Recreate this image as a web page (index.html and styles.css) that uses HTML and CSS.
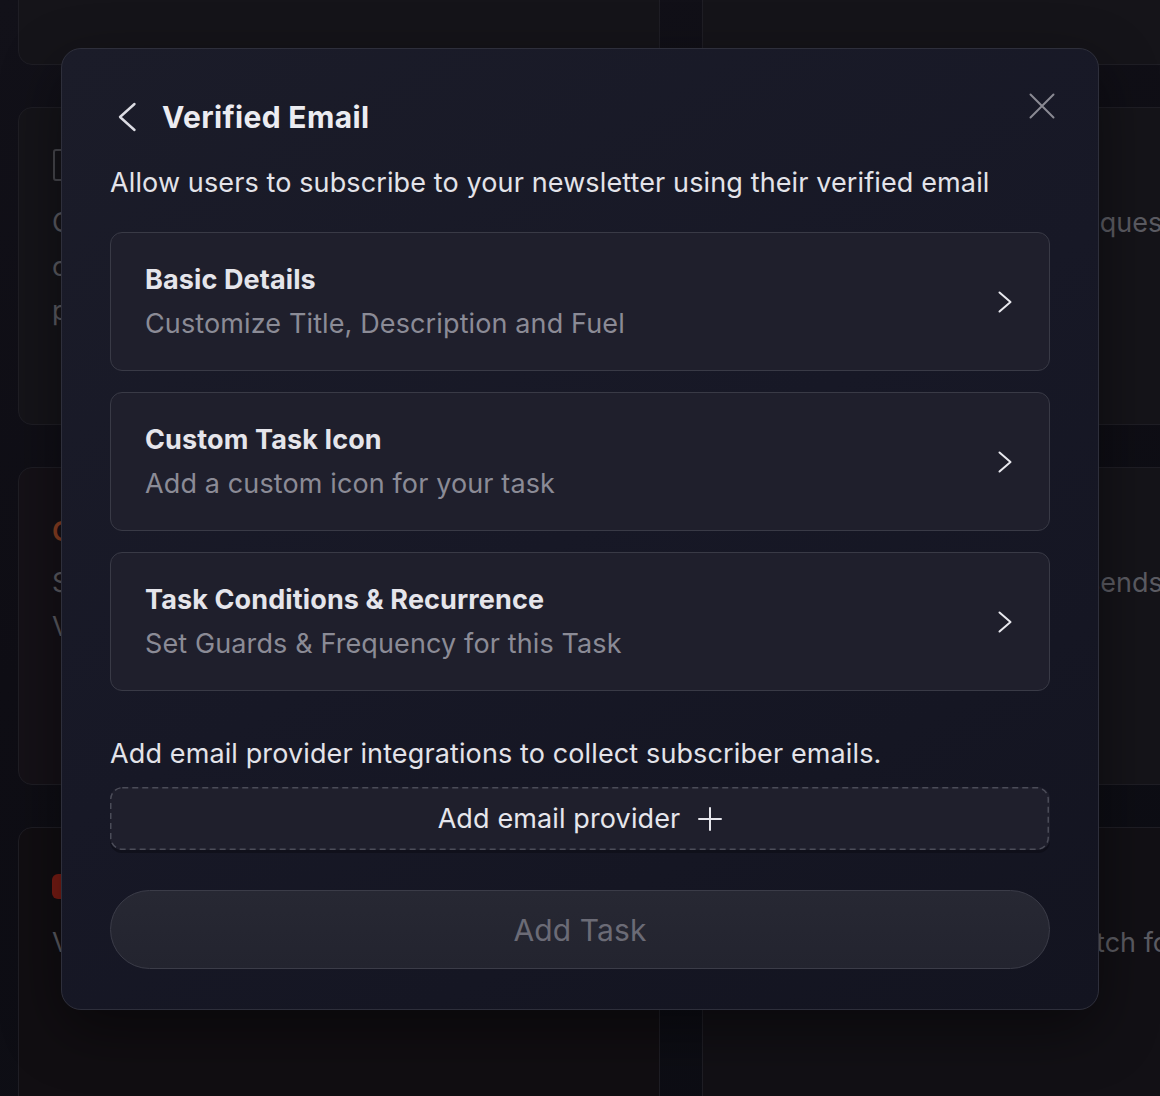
FILE: index.html
```html
<!DOCTYPE html>
<html lang="en">
<head>
<meta charset="utf-8">
<title>Verified Email</title>
<link rel="stylesheet" href="styles.css">
</head>
<body>
<div class="page">
  <div class="grid">
    <div class="bcard"></div>
    <div class="bcard"></div>

    <div class="bcard">
      <div class="bc-top"><span class="bc-icon"></span></div>
      <p class="bc-line">Connect a Discord server and</p>
      <p class="bc-line">check that each member holds</p>
      <p class="bc-line">proper roles in the community</p>
    </div>
    <div class="bcard">
      <div class="bc-top"><span class="bc-icon"></span></div>
      <p class="bc-line">Users must approve a DM request</p>
    </div>

    <div class="bcard">
      <div class="bc-top"><span class="bc-label">Coming soon</span></div>
      <p class="bc-line">Sync on-chain activity and</p>
      <p class="bc-line">Verify holdings in one step</p>
    </div>
    <div class="bcard">
      <div class="bc-top"><span class="bc-icon"></span></div>
      <p class="bc-line">Reward user when a friend sends a</p>
    </div>

    <div class="bcard">
      <div class="bc-top"><span class="bc-badge"></span></div>
      <p class="bc-line">Visit a link to complete</p>
    </div>
    <div class="bcard">
      <div class="bc-top"><span class="bc-icon"></span></div>
      <p class="bc-line">Invite your community to watch for</p>
    </div>
  </div>
</div>

<div class="modal">
  <button class="close" aria-label="Close">
    <svg width="26" height="26" viewBox="0 0 26 26"><path d="M1.5 1.5 L24.5 24.5 M24.5 1.5 L1.5 24.5" fill="none" stroke="currentColor" stroke-width="2" stroke-linecap="round"/></svg>
  </button>

  <div class="m-head">
    <svg class="back" width="22" height="30" viewBox="0 0 22 30"><path d="M18.5 2 L4 15 L18.5 28" fill="none" stroke="currentColor" stroke-width="2.4" stroke-linecap="round" stroke-linejoin="round"/></svg>
    <h1 class="m-title">Verified Email</h1>
  </div>

  <p class="m-sub">Allow users to subscribe to your newsletter using their verified email</p>

  <div class="options">
    <div class="option">
      <div class="opt-text">
        <div class="opt-title">Basic Details</div>
        <div class="opt-desc">Customize Title, Description and Fuel</div>
      </div>
      <svg class="chev" width="16" height="22" viewBox="0 0 16 22"><path d="M2.5 1.5 L13.5 11 L2.5 20.5" fill="none" stroke="currentColor" stroke-width="2" stroke-linecap="round" stroke-linejoin="round"/></svg>
    </div>
    <div class="option">
      <div class="opt-text">
        <div class="opt-title">Custom Task Icon</div>
        <div class="opt-desc">Add a custom icon for your task</div>
      </div>
      <svg class="chev" width="16" height="22" viewBox="0 0 16 22"><path d="M2.5 1.5 L13.5 11 L2.5 20.5" fill="none" stroke="currentColor" stroke-width="2" stroke-linecap="round" stroke-linejoin="round"/></svg>
    </div>
    <div class="option">
      <div class="opt-text">
        <div class="opt-title">Task Conditions &amp; Recurrence</div>
        <div class="opt-desc">Set Guards &amp; Frequency for this Task</div>
      </div>
      <svg class="chev" width="16" height="22" viewBox="0 0 16 22"><path d="M2.5 1.5 L13.5 11 L2.5 20.5" fill="none" stroke="currentColor" stroke-width="2" stroke-linecap="round" stroke-linejoin="round"/></svg>
    </div>
  </div>

  <p class="note">Add email provider integrations to collect subscriber emails.</p>

  <button class="add-provider">
    <svg class="dash" width="939" height="63" viewBox="0 0 939 63"><rect x="0.75" y="0.75" width="937.5" height="61.5" rx="11.5" ry="11.5" fill="none" stroke="#4b4c58" stroke-width="1.5" stroke-dasharray="6 4"/></svg>
    <span>Add email provider</span>
    <svg width="24" height="24" viewBox="0 0 24 24"><path d="M12 1 V23 M1 12 H23" fill="none" stroke="currentColor" stroke-width="2" stroke-linecap="round"/></svg>
  </button>

  <button class="add-task">Add Task</button>
</div>
</body>
</html>
```

FILE: styles.css
```css
* { box-sizing: border-box; }

html, body {
  margin: 0;
  padding: 0;
}

body {
  width: 1160px;
  height: 1096px;
  overflow: hidden;
  background: linear-gradient(160deg, #121119 0%, #0f0e15 45%, #0c0d14 100%);
  font-family: "Inter", "Noto Sans", "Liberation Sans", sans-serif;
  position: relative;
}

/* ---------- background (dimmed) ---------- */
.page {
  width: 1160px;
  height: 1096px;
  overflow: hidden;
}

.grid {
  margin-top: -253px;
  margin-left: 18px;
  display: grid;
  grid-template-columns: 642px 642px;
  grid-auto-rows: 318px;
  gap: 42px;
}

.bcard {
  border: 1px solid #1f1e25;
  border-radius: 14px;
  background: #151419;
  padding: 41px 33px 0 33px;
}

.bcard:nth-child(5) { background: #151117; }
.bcard:nth-child(7) { background: #110e12; }
.bcard:nth-child(8) { background: #121015; }

.bc-top {
  height: 32px;
  margin-bottom: 20px;
  display: flex;
  align-items: center;
}

.bc-icon {
  width: 32px;
  height: 32px;
  border: 2px solid #48484e;
  border-radius: 3px;
  margin-left: 1px;
}

.bc-label {
  color: #8a3f22;
  font-size: 27px;
  font-weight: 600;
  margin-top: 12px;
}

.bc-badge {
  width: 70px;
  height: 25px;
  border-radius: 6px;
  background: #7a1c14;
  margin-top: 2px;
}

.bc-line {
  margin: 0;
  font-size: 27px;
  line-height: 44px;
  color: #5c5c63;
  white-space: nowrap;
}

/* ---------- modal ---------- */
.modal {
  position: absolute;
  left: 61px;
  top: 48px;
  width: 1038px;
  padding: 48px 48px 40px;
  border: 1px solid #2e2f3b;
  border-radius: 20px;
  background: linear-gradient(150deg, #1b1c29 0%, #171826 50%, #131420 100%);
  box-shadow: 0 20px 60px rgba(0, 0, 0, 0.45);
  color: #e3e3e9;
  letter-spacing: 0.12px;
}

.close {
  position: absolute;
  top: 44px;
  right: 43px;
  width: 26px;
  height: 26px;
  padding: 0;
  border: 0;
  background: none;
  color: #8a8a93;
  display: flex;
}

.m-head {
  height: 40px;
  display: flex;
  align-items: center;
}

.back {
  margin-left: 6px;
  color: #dcdce3;
  flex: none;
}

.m-title {
  margin: 0 0 0 24px;
  font-size: 30px;
  font-weight: 700;
  line-height: 40px;
  color: #ececf1;
  letter-spacing: 0.35px;
}

.m-sub {
  margin: 28px 0 0;
  font-size: 27px;
  line-height: 36px;
  color: #e3e3e9;
}

.options {
  margin-top: 31px;
  display: flex;
  flex-direction: column;
  gap: 21px;
}

.option {
  height: 139px;
  border: 1px solid #393a46;
  border-radius: 12px;
  background: #1f1f2c;
  padding: 0 36px 0 34px;
  display: flex;
  align-items: center;
  justify-content: space-between;
}

.opt-title {
  font-size: 27px;
  font-weight: 700;
  line-height: 44px;
  color: #e5e5eb;
}

.opt-desc {
  font-size: 27px;
  line-height: 44px;
  color: #8b8b96;
}

.chev {
  color: #e8e8ee;
  flex: none;
}

.note {
  margin: 45px 0 0;
  font-size: 27px;
  line-height: 36px;
  color: #e3e3e9;
}

.add-provider {
  position: relative;
  margin-top: 15px;
  width: 100%;
  height: 63px;
  border: 0;
  border-radius: 12px;
  background: #1f1f2c;
  box-shadow: 0 3px 0 rgba(10, 10, 18, 0.5);
  color: #e6e6ec;
  font-family: inherit;
  font-size: 27px;
  letter-spacing: 0.12px;
  display: flex;
  align-items: center;
  justify-content: center;
  gap: 18px;
  padding: 0;
}

.add-provider svg { flex: none; }

.add-provider .dash {
  position: absolute;
  left: 0;
  top: 0;
}

.add-task {
  margin-top: 40px;
  width: 100%;
  height: 79px;
  border: 1px solid #3b3c48;
  border-radius: 40px;
  background: linear-gradient(180deg, #272833, #23242f);
  color: #6b6b76;
  font-family: inherit;
  font-size: 30px;
  letter-spacing: 0.12px;
  padding: 0;
  display: block;
}
```
